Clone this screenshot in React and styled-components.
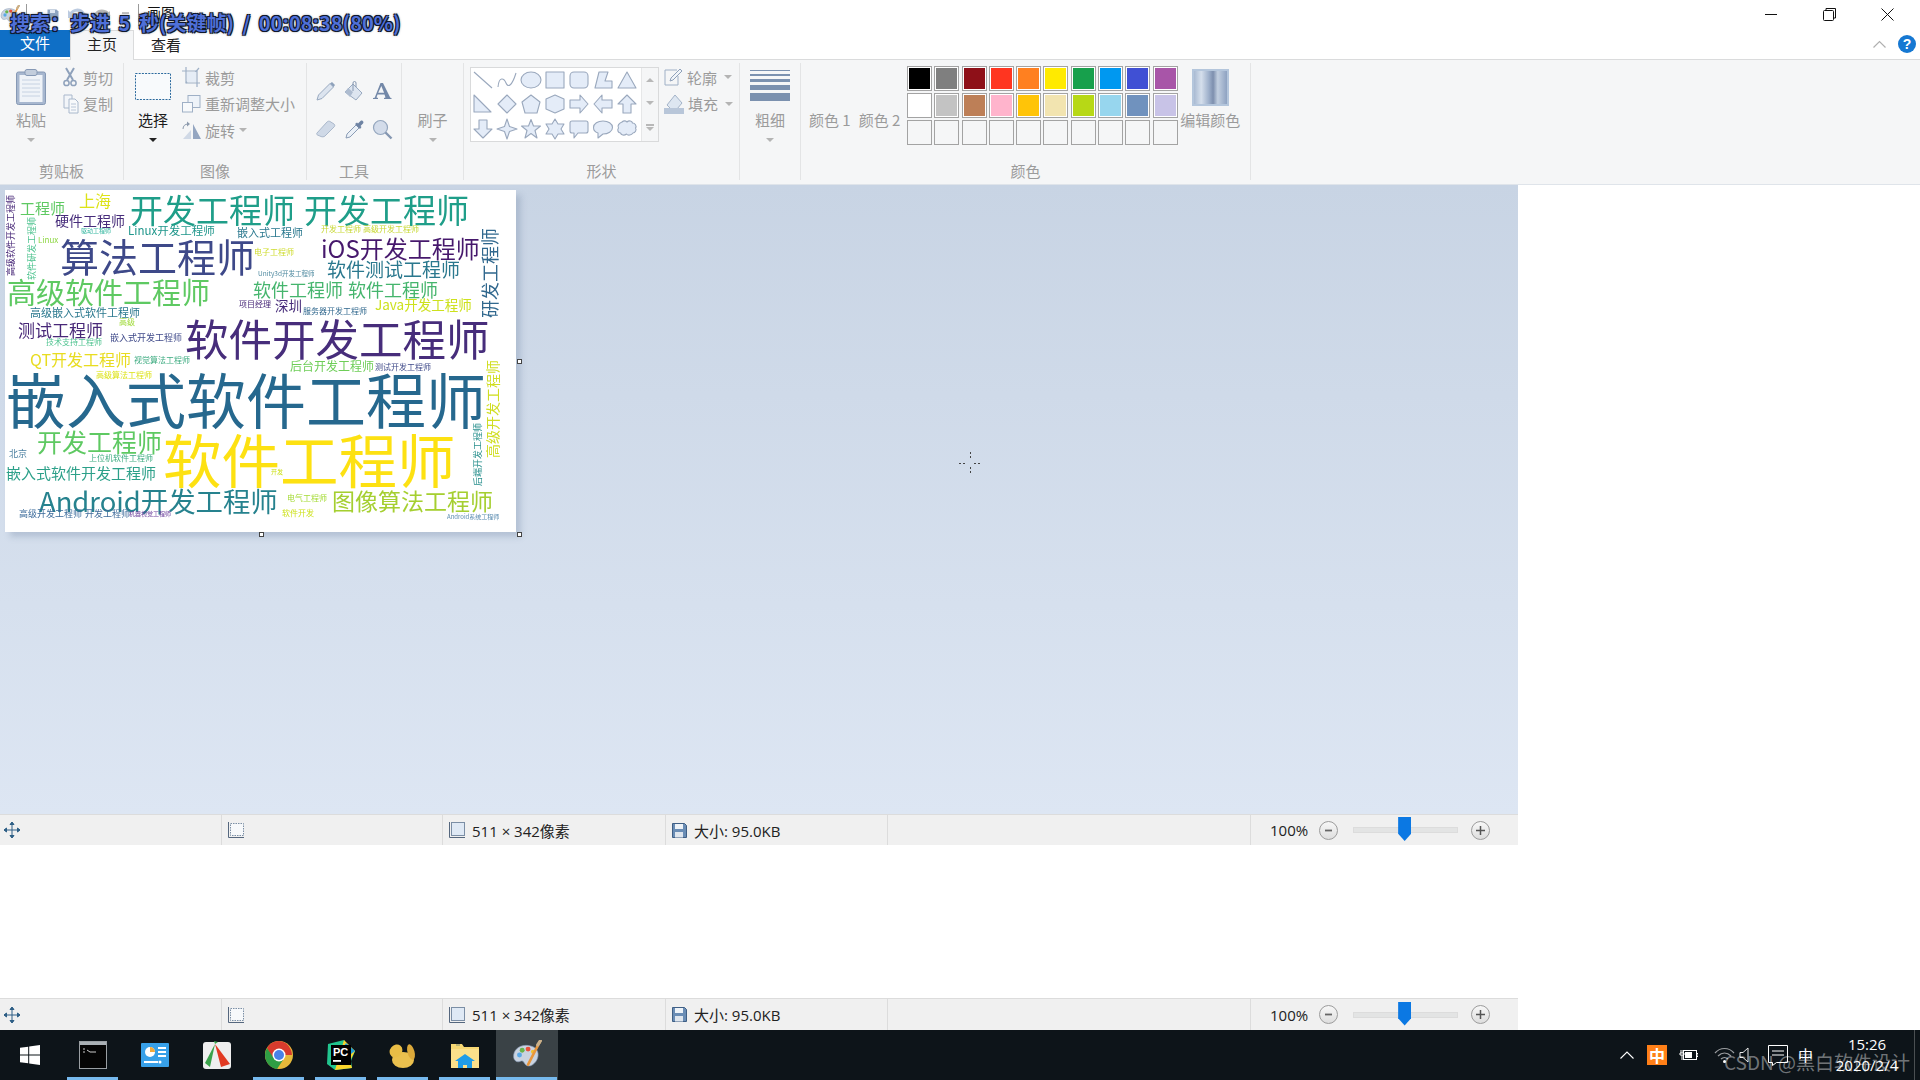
import styled, { createGlobalStyle, css } from "styled-components"

const CJK = `"Noto Sans CJK SC", "Noto Sans", sans-serif`
const UI = `"Open Sans", "Noto Sans CJK SC", sans-serif`

const GlobalStyle = createGlobalStyle`
  html, body { margin: 0; padding: 0; background: #fff; }
  body { font-family: ${CJK}; overflow: hidden; }
`

const Page = styled.div`
  position: relative;
  width: 1920px;
  height: 1080px;
  display: flex;
  flex-direction: column;
  background: #fff;
  overflow: hidden;
`

/* title bar */
const TitleBar = styled.div`
  height: 30px;
  display: flex;
  align-items: center;
`
const QuickBar = styled.div`
  display: flex;
  align-items: center;
  width: 147px;
  height: 30px;
  flex: none;
`
const QuickSep = styled.div`
  width: 1px;
  height: 22px;
  background: #9a9a9a;
  margin-left: ${p => p.$ml}px;
`
const QuickSlot = styled.div`
  margin-left: ${p => p.$ml}px;
  display: flex;
`
const TitleText = styled.div`
  font-size: 14px;
  color: #111;
  line-height: 20px;
  margin-bottom: 6px;
`
const WinControls = styled.div`
  margin-left: auto;
  display: flex;
  margin-right: 4px;
  margin-bottom: 2px;
`
const WinBtn = styled.div`
  width: 58px;
  height: 28px;
  display: flex;
  align-items: center;
  justify-content: center;
`

/* tabs */
const TabRow = styled.div`
  height: 30px;
  display: flex;
  align-items: flex-start;
  border-bottom: 1px solid #dadbdc;
  box-sizing: border-box;
`
const Tab = styled.div`
  width: 64px;
  height: 30px;
  font-size: 15px;
  line-height: 29px;
  text-align: center;
  color: #222;
  box-sizing: border-box;
  ${p => p.$file && css`
    width: 70px;
    height: 27px;
    line-height: 25px;
    background: #0f6fc6;
    color: #fff;
  `}
  ${p => p.$active && css`
    background: #f5f6f7;
    border: 1px solid #dadbdc;
    border-bottom: 0;
    line-height: 26px;
  `}
`
const TabRight = styled.div`
  margin-left: auto;
  display: flex;
  align-items: center;
  gap: 12px;
  height: 28px;
  margin-right: 4px;
`
const HelpDot = styled.div`
  width: 18px;
  height: 18px;
  border-radius: 50%;
  background: #1678d2;
  color: #fff;
  font: bold 14px/18px "Liberation Sans", sans-serif;
  text-align: center;
`

/* ribbon */
const Ribbon = styled.div`
  height: 125px;
  flex: none;
  display: flex;
  background: #f5f6f7;
  box-sizing: border-box;
  padding: 3px 0 4px;
  border-bottom: 1px solid #dfe4ea;
`
const Group = styled.section`
  width: ${p => p.$w}px;
  box-sizing: border-box;
  border-right: 1px solid #e3e4e5;
  display: flex;
  flex-direction: column;
`
const GroupBody = styled.div`
  flex: 1;
  display: flex;
  padding-top: 2px;
  padding-left: ${p => p.$pl || 0}px;
  min-height: 0;
`
const GroupLabel = styled.div`
  height: 18px;
  line-height: 18px;
  font-size: 15px;
  color: #9b9b9b;
  text-align: center;
`
const LargeBtn = styled.div`
  width: ${p => p.$w}px;
  flex: none;
  display: flex;
  flex-direction: column;
  align-items: center;
`
const LargeIcon = styled.div`
  height: 45px;
  box-sizing: border-box;
  padding-bottom: ${p => p.$pb || 0}px;
  display: flex;
  align-items: flex-end;
  justify-content: center;
`
const LargeText = styled.div`
  height: 20px;
  line-height: 20px;
  font-size: 15px;
  white-space: nowrap;
  color: ${p => (p.$on ? "#1c1c1c" : "#9b9b9b")};
`
const Caret = styled.div`
  width: 0;
  height: 0;
  border-left: 4px solid transparent;
  border-right: 4px solid transparent;
  border-top: 4px solid ${p => (p.$on ? "#222" : "#b4b4b4")};
  margin: ${p => p.$m || "8px 0 0"};
`
const SmallCol = styled.div`
  display: flex;
  flex-direction: column;
  margin-left: ${p => p.$ml}px;
  margin-top: -1px;
`
const SmallRow = styled.div`
  height: 26.500px;
  display: flex;
  align-items: center;
  gap: ${p => p.$gap || 4}px;
  font-size: 15px;
  color: #9b9b9b;
  white-space: nowrap;
`
const ToolGrid = styled.div`
  display: grid;
  grid-template-columns: 28px 28px 28px;
  grid-auto-rows: 38px;
  margin: 7px 0 0 5px;
  place-items: center;
`
const Gallery = styled.div`
  display: flex;
  width: 189px;
  height: 75px;
  margin: 2px 0 0 6px;
  border: 1px solid #d9dadb;
  box-sizing: border-box;
  flex: none;
`
const ShapeGrid = styled.div`
  width: 170px;
  background: #fff;
  display: grid;
  grid-template-columns: repeat(7, 24px);
  grid-auto-rows: 24.300px;
  place-items: center;
`
const GalleryScroll = styled.div`
  flex: 1;
  display: flex;
  flex-direction: column;
  align-items: center;
  justify-content: space-around;
  border-left: 1px solid #e6e7e8;
`
const ScrollTri = styled.div`
  width: 0;
  height: 0;
  border-left: 4px solid transparent;
  border-right: 4px solid transparent;
  ${p => (p.$up ? "border-bottom" : "border-top")}: 4px solid #b8b8b8;
`
const ScrollBar = styled.div`
  width: 8px;
  height: 2px;
  background: #b8b8b8;
  margin-bottom: 1px;
`
const ScrollStack = styled.div`
  display: flex;
  flex-direction: column;
  align-items: center;
`
const WeightLines = styled.div`
  height: 45px;
  width: 40px;
  box-sizing: border-box;
  padding-top: 5px;
  display: flex;
  flex-direction: column;
  gap: 3px;
`
const WeightLine = styled.div`
  height: ${p => p.$h}px;
  flex: none;
  background: #7b91af;
`
const ColorLabels = styled.div`
  display: flex;
  width: 106px;
  flex: none;
  padding: 45px 0 0 8px;
  gap: 8px;
  box-sizing: border-box;
`
const ColorText = styled.div`
  font-size: 15px;
  line-height: 20px;
  color: #9b9b9b;
  white-space: nowrap;
`
const Palette = styled.div`
  display: grid;
  grid-template-columns: repeat(10, 25px);
  grid-auto-rows: 25px;
  gap: 2px 2.300px;
  margin-top: 1px;
  flex: none;
`
const Swatch = styled.div`
  box-sizing: border-box;
  border: 1px solid #a3a3a3;
  background: ${p => p.$c || "#f5f6f7"};
  box-shadow: ${p => (p.$c ? "inset 0 0 0 1px #fff" : "none")};
`
const EditColor = styled(LargeBtn)`
  margin-left: 1px;
`
const EditSwatch = styled.div`
  width: 37px;
  height: 37px;
  box-sizing: border-box;
  border: 2px solid #b4c6dc;
  background: linear-gradient(90deg, #a9bad2 0%, #d5dfec 22%, #9eb0cb 45%, #7d8fae 58%, #c2cfe0 72%, #8ea2c1 100%);
`

/* canvas */
const CanvasArea = styled.div`
  position: relative;
  width: 1518px;
  height: 629px;
  flex: none;
  box-sizing: border-box;
  padding: 5px;
  background: linear-gradient(180deg, #c8d4e4 0%, #dde6f3 100%);
`
const Picture = styled.div`
  position: relative;
  width: 511px;
  height: 342px;
  background: #fff;
  box-shadow: 5px 5px 6px rgba(110, 130, 160, 0.3);
`
const Word = styled.span.attrs(p => ({
  style: { left: p.$x, top: p.$y, fontSize: p.$fs, color: p.$c },
}))`
  position: absolute;
  line-height: 1;
  white-space: nowrap;
  font-family: ${CJK};
  filter: blur(0.3px);
  ${p => p.$v && css`
    writing-mode: vertical-rl;
    text-orientation: sideways;
    transform: rotate(180deg);
  `}
`
const Handle = styled.div`
  position: absolute;
  left: ${p => p.$x}px;
  top: ${p => p.$y}px;
  width: 5px;
  height: 5px;
  box-sizing: border-box;
  border: 1px solid #444;
  background: #fff;
`
const CrossCursor = styled.svg`
  position: absolute;
  left: 959px;
  top: 267px;
`

/* status bar */
const StatusBar = styled.div`
  width: 1518px;
  height: ${p => p.$h}px;
  flex: none;
  display: flex;
  align-items: center;
  box-sizing: border-box;
  background: #f0f0f0;
  border-top: 1px solid #dcdcdc;
  font-family: ${UI};
  font-size: 15px;
  color: #222;
`
const StatusCell = styled.div`
  width: ${p => p.$w}px;
  height: 100%;
  flex: none;
  box-sizing: border-box;
  padding-left: ${p => p.$pl}px;
  border-right: 1px solid #dcdcdc;
  display: flex;
  align-items: center;
  gap: 6px;
  white-space: nowrap;
`
const ZoomBox = styled.div`
  display: flex;
  align-items: center;
  padding-left: 19px;
`
const ZoomCircle = styled.div`
  width: 19px;
  height: 19px;
  box-sizing: border-box;
  border: 1px solid #9c9c9c;
  border-radius: 50%;
  background: linear-gradient(180deg, #f7f7f7, #dedede);
  color: #555;
  display: flex;
  align-items: center;
  justify-content: center;
  margin-left: ${p => p.$ml}px;
`
const ZoomTrack = styled.div`
  position: relative;
  width: 105px;
  height: 6px;
  margin-left: 15px;
  background: #e3e4e4;
  border: 1px solid #dcdcdc;
  box-sizing: border-box;
`
const ZoomThumb = styled.div`
  position: absolute;
  left: 44px;
  top: -11px;
  width: 13px;
  height: 24px;
  background: #0b78e3;
  clip-path: polygon(0 0, 100% 0, 100% 70%, 50% 100%, 0 70%);
`
const Spacer = styled.div`
  flex: 1;
`

/* taskbar */
const TaskBar = styled.div`
  position: relative;
  height: 50px;
  flex: none;
  display: flex;
  align-items: stretch;
  background: #0d1419;
`
const StartBtn = styled.div`
  width: 62px;
  box-sizing: border-box;
  padding-right: 2px;
  display: flex;
  align-items: center;
  justify-content: center;
`
const TaskItem = styled.div`
  position: relative;
  width: 62px;
  display: flex;
  align-items: center;
  justify-content: center;
  background: ${p => (p.$active ? "#3a4246" : "transparent")};
  ${p => p.$running && css`
    &::after {
      content: "";
      position: absolute;
      bottom: 0;
      height: 3px;
      left: ${p.$active ? 0 : 5}px;
      right: ${p.$active ? 1 : 6}px;
      background: #76b9ed;
    }
  `}
`
const Tray = styled.div`
  margin-left: auto;
  display: flex;
  align-items: center;
  color: #fff;
  padding-right: 5px;
`
const TraySlot = styled.div`
  margin-left: ${p => p.$ml}px;
  display: flex;
  align-items: center;
`
const ImeBox = styled.div`
  width: 20px;
  height: 20px;
  background: #ff7f17;
  font-size: 16px;
  line-height: 20px;
  text-align: center;
  font-weight: 700;
`
const ImeText = styled.div`
  font-size: 15px;
  line-height: 20px;
  width: 20px;
`
const Clock = styled.div`
  width: 74px;
  margin-left: 12px;
  text-align: center;
  font-family: ${UI};
  font-size: 15px;
  line-height: 21px;
`
const DesktopEdge = styled.div`
  width: 1px;
  height: 50px;
  background: #4a4f52;
  margin-left: 10px;
`
const Watermark = styled.div`
  position: absolute;
  left: 1724px;
  top: 19px;
  font-family: ${CJK};
  font-size: 19px;
  line-height: 26px;
  color: rgba(255, 255, 255, 0.42);
  white-space: nowrap;
`

/* player overlay text burned in at the top */
const SeekOverlay = styled.div`
  position: absolute;
  left: 10px;
  top: 9px;
  font-family: ${CJK};
  font-size: 20px;
  font-weight: 700;
  line-height: 28px;
  word-spacing: 4px;
  color: #4f70d8;
  white-space: pre;
  text-shadow: -1px -1px 0 #10182c, 1px -1px 0 #10182c, -1px 1px 0 #10182c, 1px 1px 0 #10182c, 0 0 3px #10182c;
`

const Svg = ({ w, h = w, vb, children }) => (
  <svg width={w} height={h} viewBox={vb || `0 0 ${w} ${h}`} fill="none">{children}</svg>
)

const PaletteIcon = ({ size }) => (
  <Svg w={size} vb="0 0 28 28">
    <path d="M13 5C6 5 1 10 1.500 16c.4 4 4 5 6 4 2-.9 3-.5 4 1.500 1 2 3 3.500 6 2.500 5-2 8-8 6.500-13C22.500 7 18 5 13 5Z" fill="#c9d3e0" stroke="#8093ad" strokeWidth=".6" />
    <circle cx="7" cy="14" r="2.300" fill="#5aa9e6" />
    <circle cx="9.500" cy="9.500" r="2.300" fill="#69b34c" />
    <circle cx="15" cy="8.500" r="2.300" fill="#e8503a" />
    <circle cx="19.500" cy="11" r="1.800" fill="#f2c12e" />
    <path d="M26 1.500 15 23" stroke="#e8963c" strokeWidth="2.400" strokeLinecap="round" />
    <path d="M26.500 .8 24 4.500" stroke="#c9b08a" strokeWidth="3" strokeLinecap="round" />
  </Svg>
)

const shapeRows = [
  "M2 3L20 19", "M2 18C3 7 8 9 10 14S16 17 20 4", "ellipse", "M2 3H20V19H2Z", "rounded", "M3 19L7 3H16L13 12H20V19Z", "M11 3L20 19H2Z",
  "M2 2L19 19H2Z", "M11 2L20 11 11 20 2 11Z", "M11 2L20 9 17 20H5L2 9Z", "M11 2L20 6V16L11 20 2 16V6Z", "M2 7H12V2L20 11 12 20V15H2Z", "M20 7H10V2L2 11 10 20V15H20Z", "M11 2L20 11H15V20H7V11H2Z",
  "M7 2H15V11H20L11 20 2 11H7Z", "M11 1L13.500 8.500 21 11 13.500 13.500 11 21 8.500 13.500 1 11 8.500 8.500Z", "M11 1.500L13.500 8H20.500L15 12.500 17 20 11 15.500 5 20 7 12.500 1.500 8H8.500Z", "M11 1L14 6H20L17 11 20 16H14L11 21 8 16H2L5 11 2 6H8Z", "M4 3H18Q20 3 20 5V13Q20 15 18 15H10L6 20V15H4Q2 15 2 13V5Q2 3 4 3Z", "M11 3C16 3 20.500 5.500 20.500 9.500S16 16 11 16L6 20V15C3 14 1.500 12 1.500 9.500 1.500 5.500 6 3 11 3Z", "M6 4C8 2 10 3 11 4 13 2 16 3 16.500 5 19 5 21 8 19.500 10 21 12 19 15 17 15 15.500 17 12 18 10.500 16 8 18 5 17 4.500 15 2 15 1 12 2.500 10 1 8 3 5 6 4Z",
]

const Shape = ({ d }) => {
  const line = { stroke: "#9aa8bd", strokeWidth: 1.1, fill: "#e4ecf8" }
  return (
    <Svg w={22} vb="0 0 22 22">
      {d === "ellipse" && <ellipse cx="11" cy="11" rx="10" ry="8" {...line} />}
      {d === "rounded" && <rect x="2" y="3" width="18" height="16" rx="4" {...line} />}
      {d !== "ellipse" && d !== "rounded" && (
        <path d={d} {...line} fill={d.includes("C3 7") || d === "M2 3L20 19" ? "none" : "#e4ecf8"} strokeLinejoin="round" />
      )}
    </Svg>
  )
}

const topColors = ["#000000", "#7f7f7f", "#8e1018", "#ff3520", "#ff8020", "#ffea00", "#17a04c", "#0098f0", "#4050d4", "#a855a8"]
const midColors = ["#ffffff", "#c3c3c3", "#bd7f57", "#ffb4cc", "#ffc408", "#f2e4b0", "#b7d816", "#97d6ee", "#7092be", "#c8c3e7"]

const words = [
  ["开发工程师", 130, 211, 33, "#1f9e89"],
  ["开发工程师", 304, 211, 33, "#1f9e89"],
  ["工程师", 20, 208, 15, "#5ec962"],
  ["上海", 79, 201, 16, "#dde318"],
  ["硬件工程师", 55, 221, 14, "#472d7b"],
  ["Linux开发工程师", 128, 231, 11.5, "#1f968b"],
  ["嵌入式工程师", 237, 233, 11, "#2a788e"],
  ["驱动工程师", 81, 231, 6, "#35b7a0"],
  ["开发工程师", 321, 229, 8, "#c8d835"],
  ["高级开发工程师", 363, 229, 8, "#c8d835"],
  ["算法工程师", 60, 258, 39, "#3e4989"],
  ["iOS开发工程师", 321, 249, 24, "#46186c"],
  ["电子工程师", 254, 252, 8, "#cfdc30"],
  ["软件测试工程师", 327, 270, 19, "#2a788e"],
  ["Linux", 38, 240, 8, "#8fd744"],
  ["Unity3d开发工程师", 258, 274, 6.5, "#4f8aa0"],
  ["高级软件工程师", 7, 293, 29, "#5ec962"],
  ["软件工程师", 253, 290, 18, "#45b56d"],
  ["软件工程师", 348, 290, 18, "#45b56d"],
  ["项目经理", 239, 304, 8, "#482878"],
  ["深圳", 275, 307, 13.5, "#472c7a"],
  ["服务器开发工程师", 303, 311, 8, "#31688e"],
  ["Java开发工程师", 375, 306, 13.5, "#cde11d"],
  ["高级嵌入式软件工程师", 30, 313, 11, "#2a788e"],
  ["高级", 119, 322, 8, "#a0da39"],
  ["测试工程师", 18, 331, 17, "#482878"],
  ["技术支持工程师", 46, 342, 8, "#4ec38f"],
  ["嵌入式开发工程师", 110, 338, 9, "#3e4989"],
  ["软件开发工程师", 185, 340, 43.5, "#472d7b"],
  ["QT开发工程师", 30, 360, 16, "#e8dc20"],
  ["视觉算法工程师", 134, 360, 8, "#3dab80"],
  ["后台开发工程师", 290, 367, 12, "#6ece58"],
  ["测试开发工程师", 375, 367, 8, "#3e4989"],
  ["高级算法工程师", 96, 375, 8, "#dde318"],
  ["嵌入式软件工程师", 6, 402, 60, "#26688e"],
  ["开发工程师", 37, 443, 25, "#5ec962"],
  ["软件工程师", 163, 462, 58.5, "#fde112"],
  ["北京", 9, 454, 9, "#4a7fa0"],
  ["上位机软件工程师", 89, 458, 8, "#3dab80"],
  ["嵌入式软件开发工程师", 6, 473, 15, "#2ca089"],
  ["开发", 271, 472, 6, "#cde11d"],
  ["Android开发工程师", 39, 502, 27.4, "#26828e"],
  ["电气工程师", 287, 498, 8, "#a5db36"],
  ["图像算法工程师", 332, 502, 23, "#a5cf30"],
  ["高级开发工程师", 19, 514, 9, "#3a6a9a"],
  ["开发工程师", 85, 514, 9, "#3e6b9a"],
  ["机器视觉工程师", 129, 514, 6, "#6a3d9a"],
  ["软件开发", 282, 513, 8, "#cde11d"],
  ["Android系统工程师", 447, 517, 6, "#5a8cb0"],
]

const verticalWords = [
  ["研发工程师", 480, 228, 18, "#31688e"],
  ["软件研发工程师", 27, 217, 9, "#4ec38f"],
  ["高级软件开发工程师", 6, 195, 9, "#482878"],
  ["后端开发工程师", 473, 423, 9, "#2a908e"],
  ["高级开发工程师", 485, 360, 14, "#d0de22"],
]

const StatusRow = ({ h }) => (
  <StatusBar $h={h}>
    <StatusCell $w={222} $pl={3}>
      <Svg w={18} vb="0 0 18 18">
        <path d="M9 1v16M1 9h16M9 1 7 3.500h4ZM9 17l-2-2.500h4ZM1 9l2.500-2v4ZM17 9l-2.500-2v4Z" stroke="#2e5f86" strokeWidth="1" fill="#2e5f86" />
      </Svg>
    </StatusCell>
    <StatusCell $w={221} $pl={5}>
      <Svg w={18} vb="0 0 18 18">
        <rect x="3.500" y="2.500" width="13" height="12" stroke="#7b8ea5" strokeDasharray="1.500 1" fill="#f7f9fb" />
        <path d="M1.500 1v15.500H17" stroke="#55677e" />
      </Svg>
    </StatusCell>
    <StatusCell $w={223} $pl={5}>
      <Svg w={18} vb="0 0 18 18">
        <rect x="3.500" y="1.500" width="13" height="13" stroke="#7b8ea5" fill="#dfe9f5" />
        <path d="M1.500 1v15.500H17" stroke="#55677e" />
      </Svg>
      <span>511 × 342像素</span>
    </StatusCell>
    <StatusCell $w={222} $pl={5}>
      <Svg w={17} vb="0 0 17 17">
        <path d="M1.500 1.500h12l2 2v12h-14Z" fill="#6a8db5" stroke="#3f5f85" />
        <rect x="4" y="2" width="8" height="5" fill="#eef3f8" />
        <rect x="4" y="10" width="8" height="5.500" fill="#dfe6ee" />
      </Svg>
      <span>大小: 95.0KB</span>
    </StatusCell>
    <StatusCell $w={363} $pl={0} />
    <ZoomBox>
      <span>100%</span>
      <ZoomCircle $ml={11}><Svg w={9} vb="0 0 9 9"><path d="M1 4.500h7" stroke="#666" strokeWidth="1.800" /></Svg></ZoomCircle>
      <ZoomTrack><ZoomThumb /></ZoomTrack>
      <ZoomCircle $ml={13}><Svg w={11} vb="0 0 11 11"><path d="M1 5.500h9M5.500 1v9" stroke="#555" strokeWidth="1.500" /></Svg></ZoomCircle>
    </ZoomBox>
  </StatusBar>
)

export default function App() {
  return (
    <Page>
      <GlobalStyle />
      <TitleBar>
        <QuickBar>
          <PaletteIcon size={20} />
          <QuickSep $ml={6} />
          <QuickSlot $ml={20}>
            <Svg w={12} vb="0 0 12 12"><path d="M.5.5h9l2 2v9H.5Z" fill="#8fa5c2" /><rect x="3" y="1" width="5" height="3" fill="#dfe7f2" /></Svg>
          </QuickSlot>
          <QuickSlot $ml={8}>
            <Svg w={20} vb="0 0 20 20"><path d="M3 11C4 5 12 3 16 8c2 3 1 6-1 8" stroke="#bccbe0" strokeWidth="3" /><path d="M1 5v8h8Z" fill="#bccbe0" /></Svg>
          </QuickSlot>
          <QuickSlot $ml={6}>
            <Svg w={18} vb="0 0 18 18"><path d="M16 10C15 5 7 3 3 8c-2 3-1 5 1 7" stroke="#b8b8b8" strokeWidth="3" /><path d="M17 5v8H9Z" fill="#b8b8b8" /></Svg>
          </QuickSlot>
          <QuickSlot $ml={11}>
            <Svg w={7} vb="0 0 7 7"><path d="M0 1h7M0 4h7L3.500 7Z" stroke="#333" fill="#333" strokeWidth=".6" /></Svg>
          </QuickSlot>
          <QuickSep $ml={9} />
        </QuickBar>
        <TitleText>画图</TitleText>
        <WinControls>
          <WinBtn><Svg w={12} vb="0 0 12 12"><path d="M0 6.500h12" stroke="#111" /></Svg></WinBtn>
          <WinBtn><Svg w={13} vb="0 0 13 13"><rect x=".5" y="2.500" width="10" height="10" rx="1" stroke="#111" /><path d="M3 2.500V.5h9.500V10h-2" stroke="#111" /></Svg></WinBtn>
          <WinBtn><Svg w={13} vb="0 0 13 13"><path d="M.5.5l12 12M12.500.5l-12 12" stroke="#111" /></Svg></WinBtn>
        </WinControls>
      </TitleBar>

      <TabRow>
        <Tab $file>文件</Tab>
        <Tab $active>主页</Tab>
        <Tab>查看</Tab>
        <TabRight>
          <Svg w={13} h={8} vb="0 0 13 8"><path d="M.5 7.500 6.500 1.500l6 6" stroke="#b0b0b0" strokeWidth="1.200" /></Svg>
          <HelpDot>?</HelpDot>
        </TabRight>
      </TabRow>

      <Ribbon>
        <Group $w={124}>
          <GroupBody $pl={8}>
            <LargeBtn $w={46}>
              <LargeIcon $pb={5}>
                <Svg w={30} h={36} vb="0 0 30 36">
                  <rect x=".5" y="3" width="29" height="32.500" rx="2" fill="#a7b7cf" stroke="#8699b5" />
                  <rect x="3.500" y="6" width="23" height="27" fill="#eff3f8" />
                  <path d="M6 11h18M6 15h18M6 19h18M6 23h18M6 27h18" stroke="#c6d2e2" />
                  <rect x="9" y=".5" width="12" height="6" rx="2" fill="#c2cddc" stroke="#8699b5" />
                </Svg>
              </LargeIcon>
              <LargeText>粘贴</LargeText>
              <Caret />
            </LargeBtn>
            <SmallCol $ml={9}>
              <SmallRow $gap={6}>
                <Svg w={14} h={20} vb="0 0 14 20">
                  <path d="M3 1 10 13M11 1 4 13" stroke="#8ea1bb" strokeWidth="2" />
                  <circle cx="3.500" cy="16" r="2.600" stroke="#8ea1bb" strokeWidth="1.500" />
                  <circle cx="10.500" cy="16" r="2.600" stroke="#8ea1bb" strokeWidth="1.500" />
                </Svg>
                剪切
              </SmallRow>
              <SmallRow $gap={4}>
                <Svg w={16} h={20} vb="0 0 16 20">
                  <path d="M1 1h8v13H1Z" fill="#f2f5f9" stroke="#a9b8cc" />
                  <path d="M6 5h6l3 3v11H6Z" fill="#f7f9fb" stroke="#a9b8cc" />
                  <path d="M8 10h5M8 13h5M8 16h5" stroke="#b9c6d8" />
                </Svg>
                复制
              </SmallRow>
            </SmallCol>
          </GroupBody>
          <GroupLabel>剪贴板</GroupLabel>
        </Group>

        <Group $w={183}>
          <GroupBody $pl={11}>
            <LargeBtn $w={36}>
              <LargeIcon $pb={10}>
                <Svg w={36} h={27} vb="0 0 36 27"><rect x=".5" y=".5" width="35" height="26" stroke="#2c6a9e" strokeDasharray="2 1.200" fill="#f8fafc" /></Svg>
              </LargeIcon>
              <LargeText $on>选择</LargeText>
              <Caret $on />
            </LargeBtn>
            <SmallCol $ml={11}>
              <SmallRow>
                <Svg w={19} h={20} vb="0 0 19 20">
                  <path d="M4 0v16h14M0 4h15v16" stroke="#9fb0c6" strokeWidth="1.200" fill="none" />
                  <path d="M4 16 17 1" stroke="#9fb0c6" strokeWidth="1.200" />
                  <rect x="5" y="5" width="9" height="10" fill="#e6edf6" />
                </Svg>
                裁剪
              </SmallRow>
              <SmallRow>
                <Svg w={19} h={18} vb="0 0 19 18">
                  <rect x="6" y=".5" width="12" height="12" fill="#eef3f9" stroke="#9fb0c6" />
                  <rect x=".5" y="7.500" width="10" height="9.500" fill="#f7f9fb" stroke="#9fb0c6" />
                </Svg>
                重新调整大小
              </SmallRow>
              <SmallRow>
                <Svg w={19} h={20} vb="0 0 19 20">
                  <path d="M1 19 9 10v9Z" fill="#d0d9e6" />
                  <path d="M11 4v15h8Z" fill="#94a6c1" />
                  <path d="M1 9c0-3 2-5 5-5" stroke="#8c9aad" />
                  <path d="M5 1.500 8 4 5 6.500Z" fill="#8c9aad" />
                </Svg>
                旋转
                <Caret $m="0" />
              </SmallRow>
            </SmallCol>
          </GroupBody>
          <GroupLabel>图像</GroupLabel>
        </Group>

        <Group $w={95}>
          <GroupBody $pl={0}>
            <ToolGrid>
              <Svg w={20} vb="0 0 20 20"><path d="M1 19l1.500-5L14 2.500l3.500 3.500L6 17.500Z" fill="#dce4ef" stroke="#98a9c0" /><path d="M14 2.500l3.500 3.500 1.500-2-3-3Z" fill="#8ea1bb" /></Svg>
              <Svg w={22} vb="0 0 22 22"><path d="M2 12l8-8 9 9-6 7Z" fill="#dde5f0" stroke="#98a9c0" /><path d="M2 12 5 8l5 4-3 5Z" fill="#aebcd0" /><path d="M10 11V3a1.500 1.500 0 0 1 3 0v4" stroke="#8698b1" /></Svg>
              <Svg w={20} vb="0 0 20 20">
                <path d="M1 18h5v-1l-1.500-.5 1-3h7l1 3-1.500.5v1h7.500v-1l-1.200-.3L11 2H8.500L2.700 16.700 1 17Zm5.200-6.200L9.300 5l2.800 6.800Z" fill="#7388a8" />
              </Svg>
              <Svg w={22} vb="0 0 22 22"><path d="M2 15 12 4c1-1 2-1 3-.5l4 2.500c1 1 1 2 0 3L10 18c-1 1-3 1-4 .5L2.500 17c-1-.5-1-1.300-.5-2Z" fill="#cfd9e7" stroke="#aab8cb" /></Svg>
              <Svg w={21} vb="0 0 21 21"><path d="M2 19l1-4 9-9 3 3-9 9Z" fill="#eaf0f7" stroke="#8a9cb5" /><path d="M11 5l5 5 1.500-2-1-1 2.500-2.500c1.500-1.500-1-4-2.500-2.500L14 4.500l-1-1Z" fill="#6e83a3" /></Svg>
              <Svg w={21} vb="0 0 21 21"><circle cx="8.500" cy="8.500" r="7" fill="#d3dcea" stroke="#94a6be" strokeWidth="1.200" /><path d="M13.500 13.500 19.500 19.500" stroke="#8497b1" strokeWidth="2.400" /></Svg>
            </ToolGrid>
          </GroupBody>
          <GroupLabel>工具</GroupLabel>
        </Group>

        <Group $w={62}>
          <GroupBody>
            <LargeBtn $w={61}>
              <LargeIcon />
              <LargeText>刷子</LargeText>
              <Caret />
            </LargeBtn>
          </GroupBody>
          <GroupLabel />
        </Group>

        <Group $w={276}>
          <GroupBody>
            <Gallery>
              <ShapeGrid>
                {shapeRows.map((d, i) => <Shape key={i} d={d} />)}
              </ShapeGrid>
              <GalleryScroll>
                <ScrollTri $up />
                <ScrollTri />
                <ScrollStack><ScrollBar /><ScrollTri /></ScrollStack>
              </GalleryScroll>
            </Gallery>
            <SmallCol $ml={5}>
              <SmallRow $gap={4}>
                <Svg w={19} vb="0 0 19 19"><path d="M13 2H1v15h13V8" stroke="#9fb0c6" /><path d="M6 13l1-3 9-9 2 2-9 9Z" fill="#f1f5f9" stroke="#8fa1ba" /></Svg>
                轮廓
                <Caret $m="0 0 0 3px" />
              </SmallRow>
              <SmallRow $gap={4}>
                <Svg w={20} vb="0 0 20 20"><path d="M3 11 11 1l7 8-5 6H7Z" fill="#dde6f1" stroke="#a3b3c8" /><rect x="0" y="14" width="20" height="6" fill="#b8c6d9" /></Svg>
                填充
                <Caret $m="0 0 0 3px" />
              </SmallRow>
            </SmallCol>
          </GroupBody>
          <GroupLabel>形状</GroupLabel>
        </Group>

        <Group $w={61}>
          <GroupBody>
            <LargeBtn $w={60}>
              <WeightLines>
                <WeightLine $h={1} />
                <WeightLine $h={2} />
                <WeightLine $h={3} />
                <WeightLine $h={5} />
                <WeightLine $h={8} />
              </WeightLines>
              <LargeText>粗细</LargeText>
              <Caret />
            </LargeBtn>
          </GroupBody>
          <GroupLabel />
        </Group>

        <Group $w={450}>
          <GroupBody>
            <ColorLabels>
              <ColorText>颜色 1</ColorText>
              <ColorText>颜色 2</ColorText>
            </ColorLabels>
            <Palette>
              {topColors.map(c => <Swatch key={c} $c={c} />)}
              {midColors.map(c => <Swatch key={c} $c={c} />)}
              {topColors.map(c => <Swatch key={c + "e"} />)}
            </Palette>
            <EditColor $w={63}>
              <LargeIcon $pb={4}><EditSwatch /></LargeIcon>
              <LargeText>编辑颜色</LargeText>
            </EditColor>
          </GroupBody>
          <GroupLabel>颜色</GroupLabel>
        </Group>
      </Ribbon>

      <CanvasArea>
        <Picture>
          {words.map(([t, x, cy, fs, c], i) => (
            <Word key={i} $x={x - 5} $y={cy - 190 - fs * 0.56} $fs={fs} $c={c}>{t}</Word>
          ))}
          {verticalWords.map(([t, x, y, fs, c], i) => (
            <Word key={i} $v $x={x - 5} $y={y - 190} $fs={fs} $c={c}>{t}</Word>
          ))}
        </Picture>
        <Handle $x={517} $y={174} />
        <Handle $x={259} $y={347} />
        <Handle $x={517} $y={347} />
        <CrossCursor width="23" height="23" viewBox="0 0 23 23">
          <path d="M11.500 0v8M11.500 15v8M0 11.500h8M15 11.500h8" stroke="#444" strokeDasharray="2 2" />
        </CrossCursor>
      </CanvasArea>

      <StatusRow h={31} />
      <Spacer />
      <StatusRow h={32} />

      <TaskBar>
        <StartBtn>
          <Svg w={20} vb="0 0 20 20"><path d="M0 2.800 8.200 1.700v7.800H0ZM9.200 1.500 20 0v9.500H9.200ZM0 10.500h8.200v7.800L0 17.200ZM9.200 10.500H20V20L9.200 18.500Z" fill="#fff" /></Svg>
        </StartBtn>
        <TaskItem $running>
          <Svg w={28} vb="0 0 28 28">
            <rect x=".5" y=".5" width="27" height="27" fill="#050505" stroke="#9a9fa3" />
            <rect x="1" y="1" width="26" height="3" fill="#aab0b5" />
            <path d="M4 8h2M4 11h2M8 9l3 2M11 11h6" stroke="#ccc" />
          </Svg>
        </TaskItem>
        <TaskItem>
          <Svg w={28} h={24} vb="0 0 28 24">
            <rect width="28" height="24" rx="1" fill="#37a0e8" />
            <circle cx="9" cy="9" r="5" fill="#fff" />
            <path d="M9 9V4a5 5 0 0 1 5 5Z" fill="#f2a93b" />
            <path d="M17 5h8M17 9h8M17 13h8M3 19h14" stroke="#fff" strokeWidth="1.800" />
            <circle cx="19" cy="19" r="1.500" fill="#fff" />
          </Svg>
        </TaskItem>
        <TaskItem>
          <Svg w={28} vb="0 0 28 28">
            <rect y="1" width="28" height="27" rx="3" fill="#eee" />
            <path d="M12 3 2 22l5 4Z" fill="#3aa24a" />
            <path d="M12 3l15 20-9 3Z" fill="#e23a22" />
            <path d="M12 3l-1-3 4 1Z" fill="#3aa24a" />
          </Svg>
        </TaskItem>
        <TaskItem $running>
          <Svg w={28} vb="0 0 28 28">
            <circle cx="14" cy="14" r="14" fill="#e6b93a" />
            <path d="M14 0a14 14 0 0 0-12 7l6 11 6-4h13a14 14 0 0 0-1-5A14 14 0 0 0 14 0Z" fill="#d83b2d" />
            <path d="M2 7A14 14 0 0 0 12 28l6-9-5-1-5-2Z" fill="#2f9e44" />
            <circle cx="14" cy="14" r="6.500" fill="#fff" />
            <circle cx="14" cy="14" r="5" fill="#4a82e8" />
          </Svg>
        </TaskItem>
        <TaskItem $running>
          <Svg w={30} vb="0 0 30 30">
            <path d="M2 4 18 0l3 5 8 6-4 10 1 7-17 2-8-6Z" fill="#21c58e" />
            <path d="M18 0l11 11-5 10 2 7-17 2Z" fill="#fcd52b" />
            <path d="M20 3 29 11l-4 3-7-8Z" fill="#1d9fd8" />
            <rect x="5" y="5" width="20" height="20" fill="#000" />
            <text x="7" y="16" fill="#fff" fontFamily="Liberation Sans, sans-serif" fontSize="11" fontWeight="700">PC</text>
            <rect x="7" y="20" width="8" height="1.800" fill="#fff" />
          </Svg>
        </TaskItem>
        <TaskItem $running>
          <Svg w={30} h={27} vb="0 0 30 27">
            <ellipse cx="15" cy="18" rx="11" ry="8" fill="#eac04e" />
            <ellipse cx="8" cy="9" rx="6" ry="7" fill="#e9bd46" transform="rotate(40 8 9)" />
            <ellipse cx="23" cy="10" rx="3.500" ry="8" fill="#dba93a" transform="rotate(-15 23 10)" />
          </Svg>
        </TaskItem>
        <TaskItem $running>
          <Svg w={28} h={26} vb="0 0 28 26">
            <path d="M0 2h11l2 3h15v21H0Z" fill="#f6d873" />
            <rect y="7" width="28" height="19" fill="#fbe08a" />
            <rect x="5" y="2" width="4" height="2" fill="#b8b070" />
            <path d="M14 12 24 19H21v7h-5v-3h-4v3H7v-7H4Z" fill="#1f9ce8" />
          </Svg>
        </TaskItem>
        <TaskItem $running $active>
          <PaletteIcon size={30} />
        </TaskItem>

        <Tray>
          <Svg w={14} h={8} vb="0 0 14 8"><path d="M.5 7.500 7 1l6.500 6.500" stroke="#fff" strokeWidth="1.100" /></Svg>
          <TraySlot $ml={13}><ImeBox>中</ImeBox></TraySlot>
          <TraySlot $ml={12}>
            <Svg w={19} h={14} vb="0 0 19 14">
              <rect x="4.500" y="2.500" width="13" height="9" stroke="#fff" />
              <rect x="6" y="4" width="7" height="6" fill="#fff" />
              <path d="M18 5.500h1v3h-1M2 2v3M4 2v3M1 5h4v2H1ZM3 7v5" stroke="#fff" />
            </Svg>
          </TraySlot>
          <TraySlot $ml={16}>
            <Svg w={21} h={18} vb="0 0 21 18">
              <path d="M1 7C6 1 15 1 20 7M4 10c4-4 9-4 13 0M7 13c2-2 5-2 7 0" stroke="#9a9da0" strokeWidth="1.200" />
              <circle cx="10.500" cy="15.500" r="1.500" fill="#fff" />
            </Svg>
          </TraySlot>
          <TraySlot $ml={4}>
            <Svg w={12} h={16} vb="0 0 12 16"><path d="M1 5.500h3L9 1v14l-5-4.500H1Z" stroke="#e8e8e8" fill="none" /></Svg>
          </TraySlot>
          <TraySlot $ml={17}>
            <Svg w={20} h={21} vb="0 0 20 21"><path d="M.5.5h19v17h-11l-4 3v-3h-4Z" stroke="#fff" /><path d="M4 6h12M4 10h12" stroke="#fff" /></Svg>
          </TraySlot>
          <TraySlot $ml={10}><ImeText>中</ImeText></TraySlot>
          <Clock>
            <div>15:26</div>
            <div>2020/2/4</div>
          </Clock>
          <DesktopEdge />
        </Tray>
        <Watermark>CSDN @黑白软件设计</Watermark>
      </TaskBar>

      <SeekOverlay>搜索：步进 5 秒(关键帧) / 00:08:38(80%)</SeekOverlay>
    </Page>
  )
}
